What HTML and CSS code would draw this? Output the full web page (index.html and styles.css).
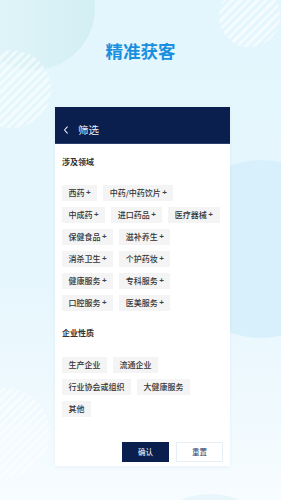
FILE: index.html
```html
<!DOCTYPE html>
<html lang="zh">
<head>
<meta charset="utf-8">
<link rel="stylesheet" href="styles.css">
</head>
<body>
<div class="screen">
  <div class="deco deco-tl"></div>
  <div class="deco deco-stripe-l"></div>
  <div class="deco deco-stripe-tr"></div>
  <div class="deco deco-r"></div>
  <div class="deco deco-stripe-bl"></div>
  <div class="deco deco-b"></div>

  <h1 class="title">精准获客</h1>

  <div class="card">
    <div class="card-head">
      <svg class="back" width="6" height="10" viewBox="0 0 6 10"><polyline points="4.3,1.8 1.5,5 4.3,8.2" fill="none" stroke="#e8ecf4" stroke-width="1.1" stroke-linecap="round" stroke-linejoin="round"/></svg>
      <span class="head-text">筛选</span>
    </div>
    <div class="card-body">
      <div class="sec-title">涉及领域</div>
      <div class="tags">
        <div class="row">
          <span class="tag">西药<span class="plus">+</span></span>
          <span class="tag">中药/中药饮片<span class="plus">+</span></span>
        </div>
        <div class="row">
          <span class="tag">中成药<span class="plus">+</span></span>
          <span class="tag">进口药品<span class="plus">+</span></span>
          <span class="tag">医疗器械<span class="plus">+</span></span>
        </div>
        <div class="row">
          <span class="tag">保健食品<span class="plus">+</span></span>
          <span class="tag">滋补养生<span class="plus">+</span></span>
        </div>
        <div class="row">
          <span class="tag">消杀卫生<span class="plus">+</span></span>
          <span class="tag">个护药妆<span class="plus">+</span></span>
        </div>
        <div class="row">
          <span class="tag">健康服务<span class="plus">+</span></span>
          <span class="tag">专科服务<span class="plus">+</span></span>
        </div>
        <div class="row">
          <span class="tag">口腔服务<span class="plus">+</span></span>
          <span class="tag">医美服务<span class="plus">+</span></span>
        </div>
      </div>
      <div class="sec-title sec-2">企业性质</div>
      <div class="tags tags-2">
        <div class="row">
          <span class="tag">生产企业</span>
          <span class="tag">流通企业</span>
        </div>
        <div class="row">
          <span class="tag">行业协会或组织</span>
          <span class="tag">大健康服务</span>
        </div>
        <div class="row">
          <span class="tag">其他</span>
        </div>
      </div>
      <div class="actions">
        <button class="btn btn-primary">确认</button>
        <button class="btn btn-ghost">重置</button>
      </div>
    </div>
  </div>
</div>
</body>
</html>
```
FILE: styles.css
```css
* { box-sizing: border-box; }
html, body { margin: 0; padding: 0; }
body {
  font-family: "Noto Sans CJK SC", "Noto Sans", sans-serif;
}
.screen {
  position: relative;
  width: 281px;
  height: 500px;
  overflow: hidden;
  background: linear-gradient(180deg, #e4f6fd 0%, #e6f6fd 55%, #eef9fe 78%, #f7fcff 100%);
  display: flex;
  flex-direction: column;
}
.deco { position: absolute; border-radius: 50%; }
.deco-tl {
  left: -29px; top: -54px; width: 124px; height: 124px;
  background: linear-gradient(90deg, #e2f5f9 0%, #d3eff4 100%);
}
.deco-stripe-l {
  left: -27px; top: 50px; width: 78px; height: 78px;
  background: repeating-linear-gradient(135deg, rgba(255,255,255,0.55) 0 3px, rgba(255,255,255,0) 3px 6px);
}
.deco-stripe-tr {
  left: 219px; top: -14px; width: 61px; height: 61px;
  background: repeating-linear-gradient(135deg, rgba(255,255,255,0.6) 0 3px, rgba(255,255,255,0) 3px 6px);
}
.deco-r {
  left: 172px; top: 160px; width: 178px; height: 178px;
  background: #d8f0fc;
}
.deco-stripe-bl {
  left: -40px; top: 388px; width: 90px; height: 90px;
  background: repeating-linear-gradient(135deg, rgba(255,255,255,0.5) 0 3px, rgba(255,255,255,0) 3px 6px);
}
.deco-b {
  left: 170px; top: 494px; width: 80px; height: 40px;
  background: #e8f6fc;
}
.title {
  position: relative;
  margin: 40px 0 0;
  text-align: center;
  font-size: 17.5px;
  line-height: 22px;
  font-weight: 700;
  color: #1b8fdf;
}
.card {
  position: relative;
  margin: 45px 0 0 55px;
  width: 175px;
  background: #fff;
  box-shadow: 0 1px 4px rgba(20, 60, 110, 0.05);
}
.card-head {
  height: 37px;
  background: #0b1f4e;
  border-bottom: 1px solid #27406e;
  display: flex;
  align-items: center;
  padding: 10px 0 0 8px;
}
.back { display: block; }
.head-text {
  margin-left: 9px;
  font-size: 10.5px;
  line-height: 14px;
  color: #e8ecf4;
}
.card-body {
  padding: 12px 7px 4px;
}
.sec-title {
  font-size: 8px;
  line-height: 12px;
  font-weight: 700;
  color: #333;
}
.sec-2 { margin-top: 16px; }
.tags {
  margin-top: 17px;
  display: flex;
  flex-direction: column;
  gap: 6px;
}
.tags-2 { margin-top: 18px; }
.row {
  display: flex;
  gap: 6px;
}
.tag {
  height: 16px;
  line-height: 16px;
  padding: 0 6.5px;
  background: #f4f4f4;
  font-size: 8px;
  font-weight: 500;
  color: #333;
  white-space: nowrap;
  display: inline-flex;
  align-items: center;
}
.plus {
  margin-left: 1.5px;
  font-family: "Liberation Sans", sans-serif;
  font-size: 8px;
  font-weight: 700;
  color: #444;
}
.actions {
  margin-top: 25px;
  display: flex;
  justify-content: flex-end;
  gap: 7px;
}
.btn {
  width: 47px;
  height: 20px;
  padding: 0;
  font-family: "Noto Sans CJK SC", "Noto Sans", sans-serif;
  font-size: 7.5px;
  line-height: 18px;
  cursor: pointer;
}
.btn-primary {
  background: #0b1f4e;
  border: 1px solid #0b1f4e;
  color: #fff;
}
.btn-ghost {
  background: #fff;
  border: 1px solid #e6eef8;
  color: #2b3a66;
}
```
